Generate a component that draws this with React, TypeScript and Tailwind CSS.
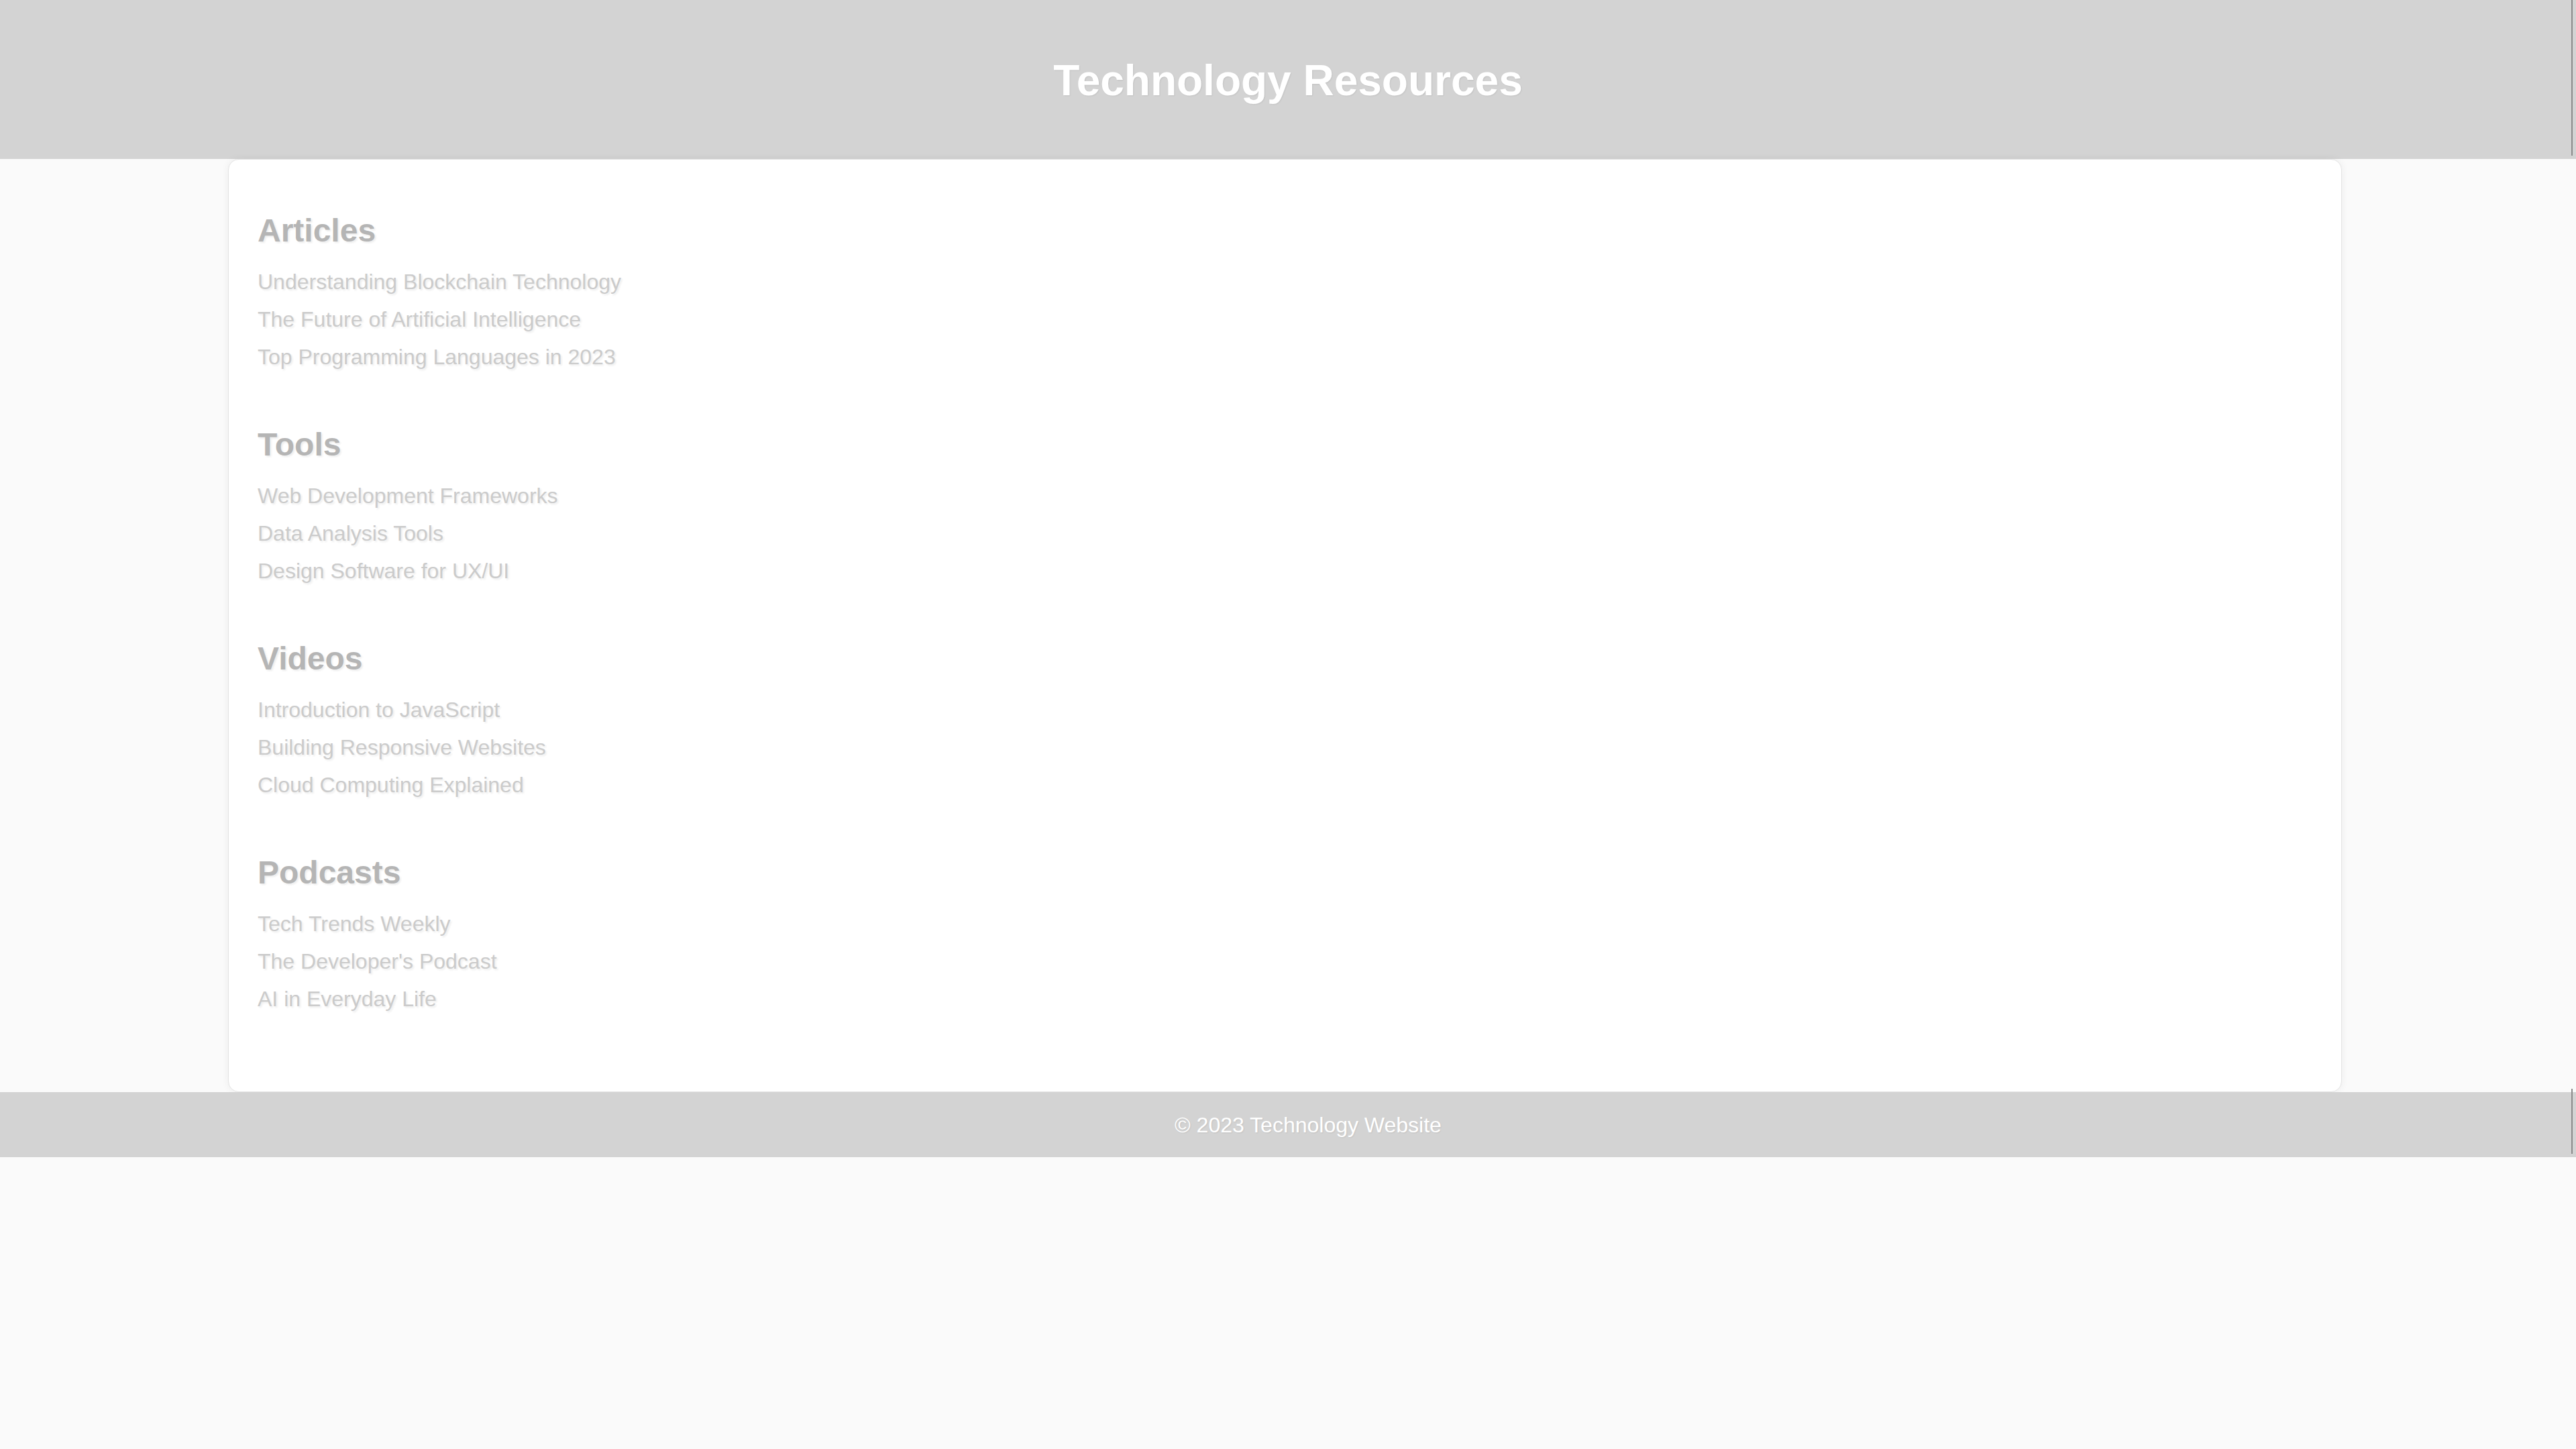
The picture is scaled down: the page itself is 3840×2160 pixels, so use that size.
const sections = [
  {
    title: "Articles",
    links: [
      "Understanding Blockchain Technology",
      "The Future of Artificial Intelligence",
      "Top Programming Languages in 2023",
    ],
  },
  {
    title: "Tools",
    links: ["Web Development Frameworks", "Data Analysis Tools", "Design Software for UX/UI"],
  },
  {
    title: "Videos",
    links: ["Introduction to JavaScript", "Building Responsive Websites", "Cloud Computing Explained"],
  },
  {
    title: "Podcasts",
    links: ["Tech Trends Weekly", "The Developer's Podcast", "AI in Everyday Life"],
  },
];

export default function App() {
  return (
    <div className="min-h-screen bg-[#fafafa] font-['Liberation_Sans',Arial,sans-serif]">
      {/* Header */}
      <header className="flex h-[237px] bg-[#d3d3d3]">
        <div className="flex-1 pl-[7px] pt-[83px]">
          <h1 className="text-center text-[64px] font-bold leading-[74px] text-white [text-shadow:1px_1px_2px_rgba(0,0,0,0.08)]">
            Technology Resources
          </h1>
        </div>
        <div className="mr-[5px] mb-[5px] w-[2px] bg-[#8a8a8a]"></div>
      </header>

      {/* Content */}
      <main className="ml-[340px] w-[3151px] rounded-[16px] border border-[#e4e4e4] bg-white pl-[43px] pt-[78px] pb-[110px] shadow-[0_0_12px_rgba(0,0,0,0.06)]">
        <div className="flex flex-col gap-[75px]">
          {sections.map((section) => (
            <section key={section.title}>
              <h2 className="text-[48px] font-bold leading-[56px] text-[#b5b5b5] [text-shadow:2px_2px_3px_rgba(0,0,0,0.08)]">
                {section.title}
              </h2>
              <ul className="mt-[20px]">
                {section.links.map((link) => (
                  <li key={link} className="text-[32px] leading-[56px] text-[#cbcbcb] [text-shadow:2px_2px_3px_rgba(0,0,0,0.08)]">
                    <a href="#">{link}</a>
                  </li>
                ))}
              </ul>
            </section>
          ))}
        </div>
      </main>

      {/* Footer */}
      <footer className="flex h-[97px] bg-[#d3d3d3]">
        <div className="flex flex-1 items-center justify-center pl-[67px]">
          <p className="text-[32px] text-white [text-shadow:1px_1px_2px_rgba(0,0,0,0.08)]">© 2023 Technology Website</p>
        </div>
        <div className="-mt-[5px] mr-[5px] mb-[5px] w-[2px] bg-[#8a8a8a]"></div>
      </footer>
    </div>
  );
}
